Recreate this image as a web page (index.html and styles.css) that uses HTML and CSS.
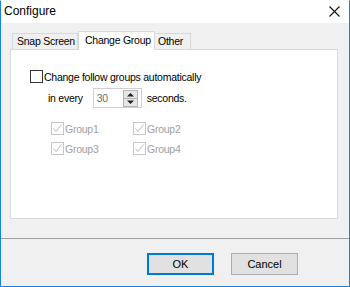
FILE: index.html
```html
<!DOCTYPE html>
<html>
<head>
<meta charset="utf-8">
<link rel="stylesheet" href="styles.css">
</head>
<body>
<div class="window">
  <div class="titlebar">
    <span class="title">Configure</span>
    <svg class="close" width="11" height="11" viewBox="0 0 11 11"><path d="M0.5 0.5 L10.5 10.5 M10.5 0.5 L0.5 10.5" stroke="#111" stroke-width="1.1" fill="none"/></svg>
  </div>
  <div class="client">
    <div class="tabs">
      <div class="tab tab-snap">Snap Screen</div>
      <div class="tab tab-active">Change Group</div>
      <div class="tab tab-other">Other</div>
    </div>
    <div class="panel">
      <div class="row row-main">
        <span class="cb"></span>
        <span class="label">Change follow groups automatically</span>
      </div>
      <div class="row row-every">
        <span class="label">in every</span>
        <div class="spin">
          <span class="spin-val">30</span>
          <span class="spin-btns">
            <svg width="15" height="17" viewBox="0 0 15 17">
              <rect x="0.5" y="0.5" width="14" height="16" fill="#e6e6e6" stroke="#b5b5b5"/>
              <line x1="1" y1="8.5" x2="14" y2="8.5" stroke="#b5b5b5"/>
              <path d="M4 6.5 L7.5 3 L11 6.5 Z" fill="#222"/>
              <path d="M4 10.5 L7.5 14 L11 10.5 Z" fill="#222"/>
            </svg>
          </span>
        </div>
        <span class="label">seconds.</span>
      </div>
      <div class="groups">
        <div class="g"><span class="cb cb-dis"><svg width="11" height="11" viewBox="0 0 11 11"><path d="M1.5 5.5 L4 8.5 L9.5 1.5" stroke="#b9b9b9" stroke-width="1" fill="none"/></svg></span><span class="glabel">Group1</span></div>
        <div class="g"><span class="cb cb-dis"><svg width="11" height="11" viewBox="0 0 11 11"><path d="M1.5 5.5 L4 8.5 L9.5 1.5" stroke="#b9b9b9" stroke-width="1" fill="none"/></svg></span><span class="glabel">Group2</span></div>
        <div class="g"><span class="cb cb-dis"><svg width="11" height="11" viewBox="0 0 11 11"><path d="M1.5 5.5 L4 8.5 L9.5 1.5" stroke="#b9b9b9" stroke-width="1" fill="none"/></svg></span><span class="glabel">Group3</span></div>
        <div class="g"><span class="cb cb-dis"><svg width="11" height="11" viewBox="0 0 11 11"><path d="M1.5 5.5 L4 8.5 L9.5 1.5" stroke="#b9b9b9" stroke-width="1" fill="none"/></svg></span><span class="glabel">Group4</span></div>
      </div>
      <div class="watermark">SOFTPEDIA<sup>®</sup></div>
    </div>
    <div class="sep"></div>
    <div class="buttons">
      <button class="btn btn-ok">OK</button>
      <button class="btn">Cancel</button>
    </div>
  </div>
</div>
</body>
</html>
```
FILE: styles.css
```css
* { box-sizing: border-box; }
html, body { margin: 0; padding: 0; }
body {
  font-family: "Liberation Sans", Arial, sans-serif;
  font-size: 10.5px;
  letter-spacing: -0.25px;
  color: #000;
  background: #fff;
}
.window {
  width: 350px;
  height: 287px;
  border: 1px solid #1883d7;
  border-top-color: #fff;
  display: flex;
  flex-direction: column;
  overflow: hidden;
}
.titlebar {
  height: 22px;
  background: #fff;
  display: flex;
  align-items: center;
  justify-content: space-between;
  padding: 0 9px 0 3px;
}
.title { font-size: 12px; letter-spacing: 0; line-height: 14px; margin-top: -2px; }
.close { margin-top: -2px; }
.client {
  flex: 1;
  background: #f0f0f0;
  display: flex;
  flex-direction: column;
}
.tabs {
  display: flex;
  align-items: flex-end;
  margin: 8px 0 0 11px;
  height: 18px;
  position: relative;
  z-index: 1;
}
.tab {
  border: 1px solid #d9d9d9;
  border-bottom: none;
  background: #f0f0f0;
  height: 16px;
  line-height: 15px;
  padding: 0 0 0 4px;
  white-space: nowrap;
}
.tab-snap { width: 66px; }
.tab-active {
  width: 77px;
  height: 19px;
  background: #fff;
  line-height: 16px;
  margin-bottom: -1px;
  padding: 0 0 0 6px;
}
.tab-other { width: 36px; border-left: none; padding: 0 0 0 3px; }
.panel {
  position: relative;
  margin-left: 9px;
  width: 328px;
  height: 170px;
  background: #fff;
  border: 1px solid #d9d9d9;
  padding: 20px 0 0 19px;
}
.row { display: flex; align-items: center; }
.cb {
  width: 13px;
  height: 13px;
  border: 1px solid #333;
  background: #fff;
  display: inline-flex;
  align-items: center;
  justify-content: center;
  flex: none;
}
.row-main .label { margin-left: 1px; }
.row-every {
  margin-top: 5px;
  padding-left: 18px;
}
.spin {
  width: 49px;
  height: 20px;
  border: 1px solid #cfcfcf;
  margin-left: 10px;
  margin-right: 5px;
  display: flex;
  align-items: center;
  justify-content: space-between;
  padding: 0 3px 0 3px;
  color: #6d6d6d;
}
.spin-btns { display: flex; margin-top: 1px; }
.groups {
  display: grid;
  grid-template-columns: 82px 82px;
  row-gap: 7px;
  margin: 14px 0 0 21px;
}
.g { display: flex; align-items: center; color: #a0a0a0; }
.cb-dis { border-color: #c6c6c6; }
.glabel { margin-left: 1px; }
.watermark {
  position: absolute;
  left: 60px;
  top: 80px;
  font-size: 30px;
  font-weight: bold;
  letter-spacing: 1px;
  color: rgba(0,0,0,0.022);
  pointer-events: none;
}
.watermark sup { font-size: 9px; }
.sep {
  height: 1px;
  background: #a0a0a0;
  margin-top: 19px;
}
.buttons {
  display: flex;
  justify-content: flex-end;
  gap: 17px;
  padding-right: 51px;
  margin-top: 14px;
}
.btn {
  font-family: inherit;
  font-size: 11px;
  width: 67px;
  height: 22px;
  background: #e1e1e1;
  border: 1px solid #adadad;
  padding: 0;
  color: #000;
}
.btn-ok { border: 2px solid #0078d7; }
```
